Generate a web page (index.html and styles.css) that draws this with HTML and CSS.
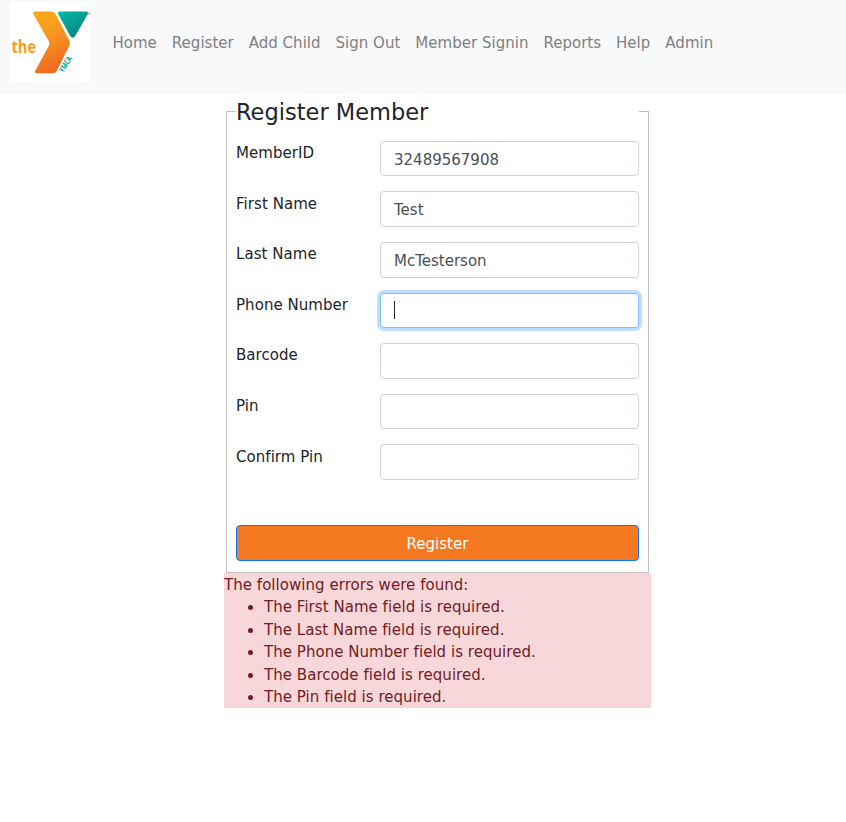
FILE: index.html
```html
<!DOCTYPE html>
<html lang="en">
<head>
<meta charset="utf-8">
<title>Register Member</title>
<link rel="stylesheet" href="styles.css">
</head>
<body>
<nav class="navbar">
  <a class="brand" href="#">
    <svg width="80" height="80" viewBox="10 2 80 80" role="img" aria-label="the YMCA">
      <defs>
        <linearGradient id="orange" x1="0" y1="0" x2="0.3" y2="1"><stop offset="0" stop-color="#fbac18"/><stop offset=".5" stop-color="#f79520"/><stop offset="1" stop-color="#f26b22"/></linearGradient>
        <linearGradient id="teal" x1="0" y1="0" x2="0.7" y2="1"><stop offset="0" stop-color="#00baae"/><stop offset="1" stop-color="#078577"/></linearGradient>
      </defs>
      <rect x="10" y="2" width="80" height="80" fill="#fff"/>
      <path d="M35 11.500H51Q54 11.500 55.500 14L69.300 40.500Q70.500 43 69.300 45.500L57 70.500Q55.500 73.300 52.500 73.300H37Q34 73.300 35.500 70.200L48.700 46Q50 43.500 48.700 41L33.500 14.500Q32.200 11.500 35 11.500Z" fill="url(#orange)"/>
      <path d="M60 11.500H86Q89 11.500 87.500 14.500L75.500 35.500Q72.700 40 69.900 35.500L58.500 14.500Q57 11.500 60 11.500Z" fill="url(#teal)"/>
      <text class="logo-the" x="11.500" y="53" textLength="24.500" lengthAdjust="spacingAndGlyphs">the</text>
      <text class="logo-ymca" transform="translate(63.500 73) rotate(-59)" textLength="17" lengthAdjust="spacingAndGlyphs">YMCA</text>
      <circle cx="89.300" cy="13.500" r=".7" fill="#078577"/>
    </svg>
  </a>
  <a class="nav-link" href="#">Home</a>
  <a class="nav-link" href="#">Register</a>
  <a class="nav-link" href="#">Add Child</a>
  <a class="nav-link" href="#">Sign Out</a>
  <a class="nav-link" href="#">Member Signin</a>
  <a class="nav-link" href="#">Reports</a>
  <a class="nav-link" href="#">Help</a>
  <a class="nav-link" href="#">Admin</a>
</nav>
<main class="content">
  <form>
    <fieldset>
      <legend>Register Member</legend>
      <div class="row"><label for="member">MemberID</label><input id="member" value="32489567908"></div>
      <div class="row"><label for="first">First Name</label><input id="first" value="Test"></div>
      <div class="row"><label for="last">Last Name</label><input id="last" value="McTesterson"></div>
      <div class="row"><label for="phone">Phone Number</label><div class="field-focus" id="phone" role="textbox" tabindex="0"><span class="caret"></span></div></div>
      <div class="row"><label for="barcode">Barcode</label><input id="barcode"></div>
      <div class="row"><label for="pin">Pin</label><input id="pin"></div>
      <div class="row"><label for="confirm">Confirm Pin</label><input id="confirm"></div>
      <button type="button">Register</button>
    </fieldset>
  </form>
  <div class="errors">The following errors were found:
    <ul>
      <li>The First Name field is required.</li>
      <li>The Last Name field is required.</li>
      <li>The Phone Number field is required.</li>
      <li>The Barcode field is required.</li>
      <li>The Pin field is required.</li>
    </ul>
  </div>
</main>
</body>
</html>
```
FILE: styles.css
```css
* { box-sizing: border-box; }
body {
  margin: 0;
  background: #fff;
  color: #212529;
  font: 15px/22.5px Verdana, "DejaVu Sans", sans-serif;
  font-variant-ligatures: none;
}
.navbar {
  display: flex;
  align-items: flex-start;
  gap: 15px;
  height: 94px;
  padding: 2px 10px;
  background: #f8f9fa;
}
.brand { height: 80px; margin-right: 7.5px; }
.brand svg { display: block; }
.logo-the { font: bold 17px "Open Sans", sans-serif; fill: #f9a01b; }
.logo-ymca { font: bold 8px "Open Sans", sans-serif; fill: #00a294; }
.nav-link {
  margin-top: 30px;
  color: #808081;
  letter-spacing: .015px;
  text-decoration: none;
  white-space: nowrap;
}
.content { width: 427px; margin: 4px 0 0 224px; }
fieldset {
  margin: 0 2px;
  padding: 5px 9px 11px;
  border: 1px solid #c0c0c0;
}
legend {
  width: 100%;
  padding: 1px 0 0;
  margin-bottom: 10.8px;
  font-size: 22.5px;
  line-height: 26px;
}
.row {
  display: flex;
  justify-content: space-between;
  margin-bottom: 15px;
}
label { padding-top: 1.2px; letter-spacing: .05px; white-space: nowrap; }
input, .field-focus {
  width: 259px;
  height: 35.6px;
  padding: 6.5px 13px 4px;
  border: 1px solid #ced4da;
  border-radius: 4px;
  background: #fff;
  color: #495057;
  font: inherit;
}
.field-focus {
  padding: 5px 13px;
  display: flex;
  align-items: center;
  border-color: #80bdff;
  box-shadow: 0 0 0 3px #bfdeff;
}
.caret { width: 1px; height: 18px; background: #212529; }
button {
  display: block;
  width: 100%;
  height: 36px;
  margin-top: 44.6px;
  padding: 3px 0 0;
  border: 1px solid #007bff;
  border-radius: 4px;
  background: #f57920;
  color: #fff;
  font: inherit;
}
.errors {
  height: 135px;
  padding-top: 1px;
  background: #f8d7da;
  color: #721c24;
  letter-spacing: .04px;
}
.errors ul { margin: 0; padding-left: 40px; }
```
